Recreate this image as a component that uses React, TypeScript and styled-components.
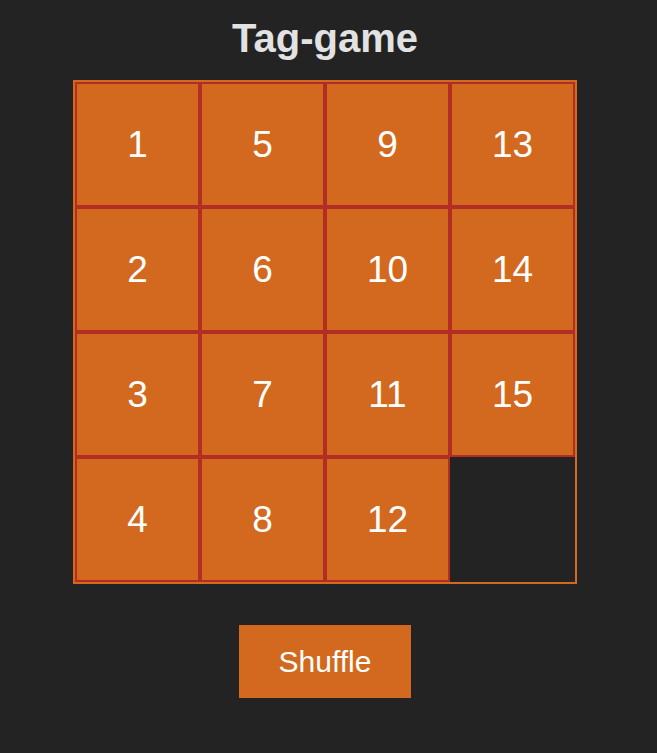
import React from "react";
import styled, { createGlobalStyle } from "styled-components";

const Global = createGlobalStyle`
  html, body {
    margin: 0;
    padding: 0;
    background: #232323;
  }
  body {
    font-family: "Liberation Sans", Arial, sans-serif;
  }
`;

const Page = styled.div`
  width: 650px;
  display: flex;
  flex-direction: column;
  align-items: center;
  padding-bottom: 55px;
`;

const Title = styled.h1`
  margin: 15px 0 19px;
  font-size: 40px;
  line-height: 46px;
  font-weight: 700;
  color: #e2e2e2;
`;

const Board = styled.div`
  display: grid;
  grid-template-columns: repeat(4, 125px);
  grid-template-rows: repeat(4, 125px);
  border: 2px solid #d2691e;
`;

const Tile = styled.div<{ $empty?: boolean }>`
  box-sizing: border-box;
  display: flex;
  align-items: center;
  justify-content: center;
  background: ${(p) => (p.$empty ? "transparent" : "#d2691e")};
  border: ${(p) => (p.$empty ? "none" : "2px solid #b22d23")};
  color: #ffffff;
  font-size: 37px;
`;

const ShuffleButton = styled.button`
  margin-top: 41px;
  width: 172px;
  height: 73px;
  border: none;
  background: #d2691e;
  color: #ffffff;
  font-family: "Liberation Sans", Arial, sans-serif;
  font-size: 30px;
  cursor: pointer;
`;

const cells: (number | null)[] = [
  1, 5, 9, 13,
  2, 6, 10, 14,
  3, 7, 11, 15,
  4, 8, 12, null,
];

export default function App() {
  return (
    <>
      <Global />
      <Page>
        <Title>Tag-game</Title>
        <Board>
          {cells.map((n, i) =>
            n === null ? <Tile key={i} $empty /> : <Tile key={i}>{n}</Tile>
          )}
        </Board>
        <ShuffleButton>Shuffle</ShuffleButton>
      </Page>
    </>
  );
}
